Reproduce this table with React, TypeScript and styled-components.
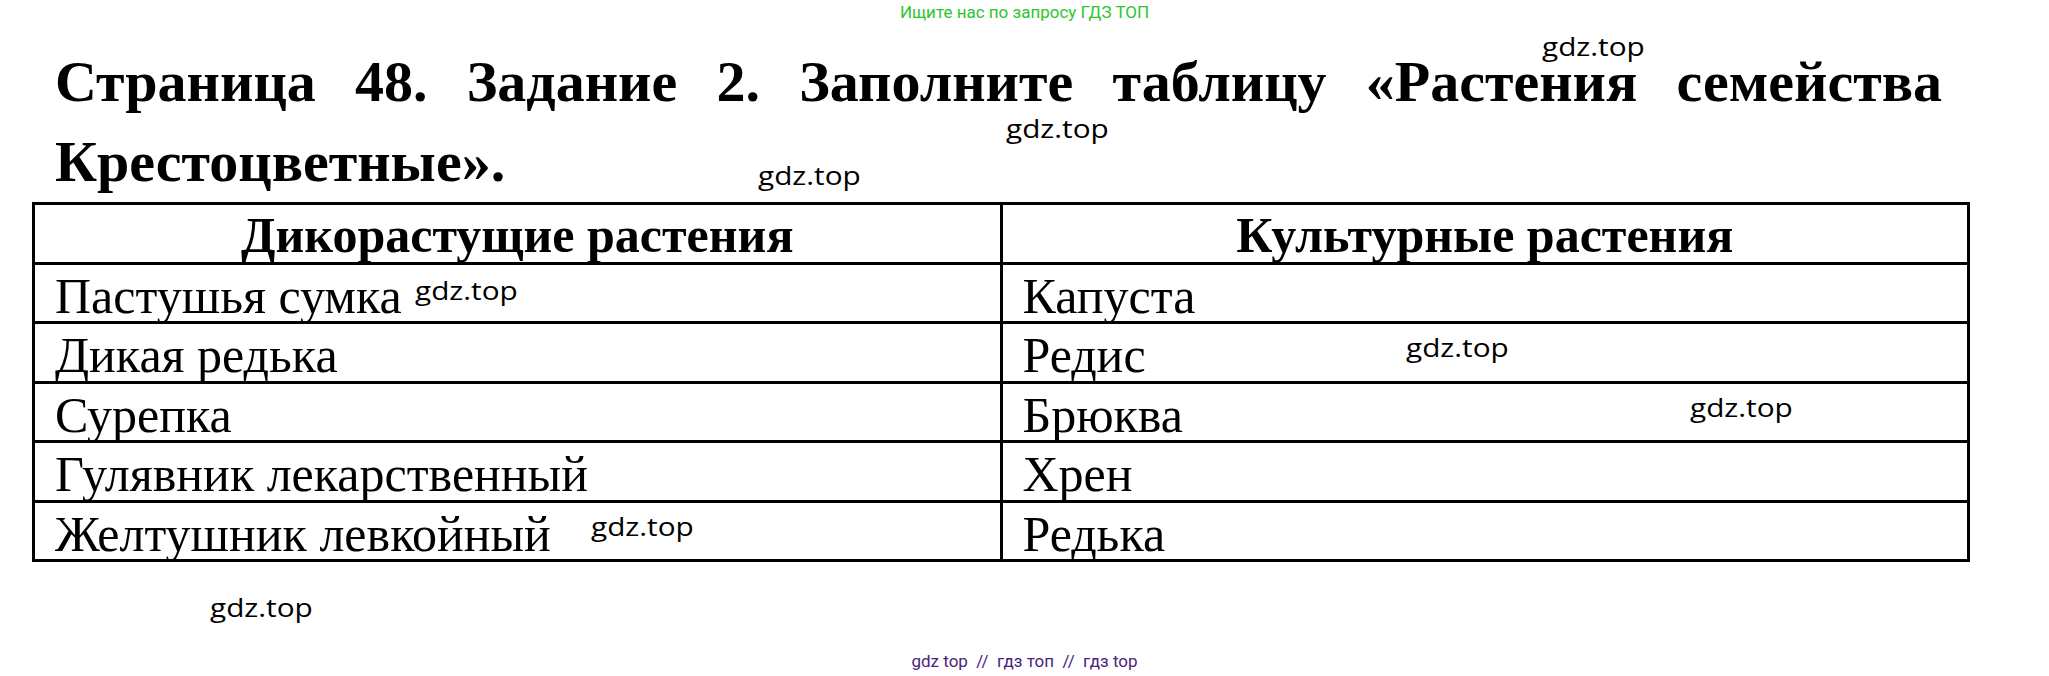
import React from "react";
import styled, { createGlobalStyle } from "styled-components";

const GlobalStyle = createGlobalStyle`
  html, body {
    margin: 0;
    padding: 0;
    background: #ffffff;
  }
  body {
    font-family: "Liberation Serif", "Times New Roman", serif;
    color: #000;
  }
`;

const Page = styled.div`
  position: relative;
  width: 2049px;
  height: 676px;
  overflow: hidden;
  display: flex;
  flex-direction: column;
  background: #fff;
`;

const SearchNote = styled.div`
  height: 22px;
  padding-top: 2px;
  box-sizing: border-box;
  text-align: center;
  font-family: Roboto, "Liberation Sans", sans-serif;
  font-size: 17px;
  line-height: 20px;
  color: #2ec52e;
`;

const Title = styled.h1`
  margin: 20px 107px 0 55px;
  font-family: "Liberation Serif", "Times New Roman", serif;
  font-weight: bold;
  font-size: 58px;
  line-height: 80px;
  text-align: justify;
  text-align-last: left;
`;

const Table = styled.div`
  margin-left: 32px;
  width: 1938px;
  box-sizing: border-box;
  display: grid;
  grid-template-columns: 1fr 1fr;
  grid-template-rows: repeat(6, 59.5px);
  border-top: 3px solid #000;
  border-left: 3px solid #000;
`;

const Cell = styled.div<{ $head?: boolean }>`
  box-sizing: border-box;
  border-right: 3px solid #000;
  border-bottom: 3px solid #000;
  display: flex;
  align-items: center;
  justify-content: ${(p) => (p.$head ? "center" : "flex-start")};
  padding-left: ${(p) => (p.$head ? "0" : "20px")};
  padding-top: ${(p) => (p.$head ? "3px" : "6px")};
  font-family: "Liberation Serif", "Times New Roman", serif;
  font-weight: ${(p) => (p.$head ? "bold" : "normal")};
  font-size: 50px;
  line-height: 1;
  white-space: nowrap;
`;

const Footer = styled.div`
  margin-top: auto;
  height: 20px;
  margin-bottom: 5px;
  text-align: center;
  font-family: Roboto, "Liberation Sans", sans-serif;
  font-size: 17px;
  line-height: 20px;
  color: #4a2380;
  white-space: pre;
`;

const Watermark = styled.span<{ $x: number; $y: number }>`
  position: absolute;
  left: ${(p) => p.$x}px;
  top: ${(p) => p.$y - 3}px;
  font-family: "Open Sans", "Liberation Sans", sans-serif;
  font-size: 25px;
  line-height: 24px;
  color: #000;
  white-space: nowrap;
  pointer-events: none;
  transform: scaleX(1.19);
  transform-origin: left top;
`;

const wild = [
  "Пастушья сумка",
  "Дикая редька",
  "Сурепка",
  "Гулявник лекарственный",
  "Желтушник левкойный",
];
const cultivated = ["Капуста", "Редис", "Брюква", "Хрен", "Редька"];

const marks: Array<[number, number]> = [
  [1542, 37],
  [1006, 119],
  [758, 166],
  [415, 281],
  [1406, 338],
  [1690, 398],
  [591, 517],
  [210, 598],
];

export default function App() {
  return (
    <>
      <GlobalStyle />
      <Page>
        <SearchNote>Ищите нас по запросу ГДЗ ТОП</SearchNote>
        <Title>
          Страница 48. Задание 2. Заполните таблицу «Растения семейства
          Крестоцветные».
        </Title>
        <Table>
          <Cell $head>Дикорастущие растения</Cell>
          <Cell $head>Культурные растения</Cell>
          {wild.map((w, i) => (
            <React.Fragment key={w}>
              <Cell>{w}</Cell>
              <Cell>{cultivated[i]}</Cell>
            </React.Fragment>
          ))}
        </Table>
        <Footer>{"gdz top  //  гдз топ  //  гдз top"}</Footer>
        {marks.map(([x, y], i) => (
          <Watermark key={i} $x={x} $y={y}>
            gdz.top
          </Watermark>
        ))}
      </Page>
    </>
  );
}
